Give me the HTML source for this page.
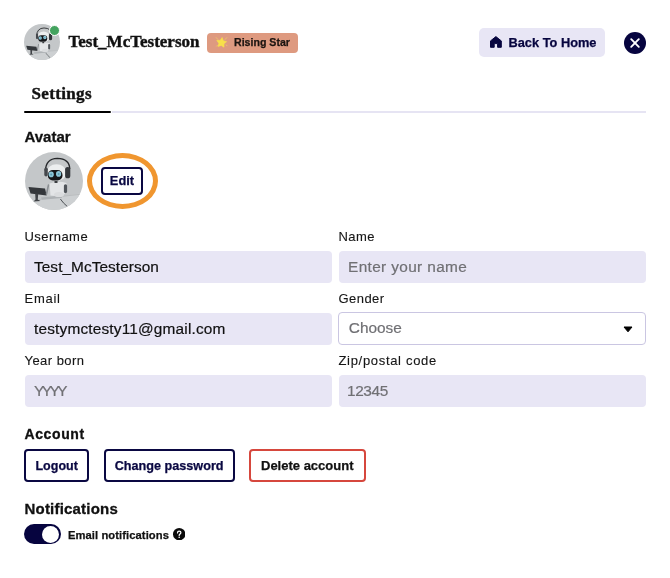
<!DOCTYPE html>
<html><head><meta charset="utf-8">
<style>
*{box-sizing:border-box;margin:0;padding:0}
html,body{width:670px;height:578px;background:#fff;overflow:hidden}
body{position:relative;will-change:transform;font-family:"Liberation Sans",sans-serif;color:#111}
.a{position:absolute;white-space:nowrap}
.serif{font-family:"Liberation Serif",serif;font-weight:700;color:#111;-webkit-text-stroke:0.4px #111}
.lbl{font-size:13px;color:#161616;line-height:16px;letter-spacing:0.45px;-webkit-text-stroke:0.12px currentColor}
.inp{position:absolute;height:32px;width:307px;background:#e8e6f5;border-radius:4px;font-size:15.4px;line-height:32px;padding-left:9.5px;color:#111;letter-spacing:0.06px;-webkit-text-stroke:0.2px currentColor}
.ph{color:#707074}
.h{font-size:14px;font-weight:700;color:#111;line-height:16px;-webkit-text-stroke:0.3px #111}
.bs{-webkit-text-stroke:0.25px currentColor}
.btn{position:absolute;height:33px;border:2px solid #0a0842;border-radius:4px;font-size:13px;font-weight:700;color:#0a0842;line-height:29px;text-align:center;-webkit-text-stroke:0.25px currentColor}
</style></head><body>

<!-- small avatar -->
<svg class="a" style="left:24px;top:24px" width="36" height="36" viewBox="0 0 58 58"><use href="#robot"/></svg>
<div class="a" style="left:48.6px;top:24.7px;width:11.4px;height:11.4px;border-radius:50%;background:#44a35f;border:1.5px solid #fff"></div>

<div class="a serif" style="left:68.5px;top:31.8px;font-size:17px;line-height:20px">Test_McTesterson</div>

<div class="a" style="left:207px;top:33px;width:91px;height:19.5px;background:#de9a80;border-radius:4px"></div>
<svg class="a" style="left:215px;top:36px" width="13" height="13" viewBox="0 0 13 13"><path d="M7.12 1.54 L8.34 4.72 L11.60 5.70 L8.95 7.84 L9.03 11.24 L6.18 9.38 L2.96 10.51 L3.85 7.22 L1.78 4.51 L5.19 4.34 Z" fill="#f8e04a" stroke="#f8e04a" stroke-width="0.6" stroke-linejoin="round"/><path d="M1.2 1.6 L2.8 3.4 M11.8 1.6 L10.2 3.4 M1.5 10.2 L2.4 9.3 M12 9.8 L11.2 8.8" stroke="#f3d860" stroke-width="0.8" stroke-linecap="round" opacity="0.8"/></svg>
<div class="a bs" style="left:234px;top:36px;font-size:10.6px;font-weight:700;color:#1b1410;line-height:13px">Rising Star</div>

<div class="a" style="left:479.3px;top:28px;width:126px;height:28.8px;background:#e8e6f5;border-radius:5px"></div>
<svg class="a" style="left:489.8px;top:36.2px" width="12" height="12" viewBox="0 0 12 12"><path d="M5.9 0.6 L11.3 4.9 L11.3 11.3 L7.6 11.3 L7.6 7.6 L4.2 7.6 L4.2 11.3 L0.5 11.3 L0.5 4.9 Z" fill="#07053f" stroke="#07053f" stroke-width="1" stroke-linejoin="round"/></svg>
<div class="a bs" style="left:508.5px;top:35px;font-size:12.8px;font-weight:700;color:#07053f;line-height:15px">Back To Home</div>

<div class="a" style="left:623.7px;top:31.5px;width:22px;height:22px;border-radius:50%;background:#06043f"></div>
<svg class="a" style="left:623.7px;top:31.5px" width="22" height="22" viewBox="0 0 22 22"><path d="M7.2 7.2 L14.8 14.8 M14.8 7.2 L7.2 14.8" stroke="#fff" stroke-width="1.9" stroke-linecap="round"/></svg>

<!-- tabs -->
<div class="a serif" style="left:31.5px;top:84px;font-size:17px;line-height:20px;letter-spacing:0.35px">Settings</div>
<div class="a" style="left:112px;top:111px;width:534px;height:2.3px;background:#e6e4f3"></div>
<div class="a" style="left:24px;top:110.7px;width:86.5px;height:2.5px;background:#000;border-radius:2px"></div>

<div class="a h" style="left:24.5px;top:128.8px;font-size:15px">Avatar</div>
<svg class="a" style="left:24.5px;top:152.3px" width="58" height="58" viewBox="0 0 58 58"><use href="#robot"/></svg>

<div class="a" style="left:87.2px;top:152.7px;width:71px;height:56px;border-radius:50%;border:5.5px solid #f0962f"></div>
<div class="a btn" style="left:100.6px;top:167.2px;width:42.7px;height:28.3px;font-size:12.8px;line-height:24.6px;border-width:2px">Edit</div>

<!-- form -->
<div class="a lbl" style="left:24.5px;top:229px">Username</div>
<div class="a lbl" style="left:338.5px;top:229px">Name</div>
<div class="inp" style="left:24.5px;top:250.5px">Test_McTesterson</div>
<div class="inp ph" style="left:338.5px;top:250.5px;letter-spacing:0.36px">Enter your name</div>

<div class="a lbl" style="left:24.5px;top:290.6px;letter-spacing:0.75px">Email</div>
<div class="a lbl" style="left:338.5px;top:291px">Gender</div>
<div class="inp" style="left:24.5px;top:312.5px;letter-spacing:0.18px">testymctesty11@gmail.com</div>
<div class="inp ph" style="left:338.3px;top:312.2px;height:32.4px;width:307.4px;background:#fff;border:1px solid #cac6e2;padding-left:9.5px;line-height:30px;letter-spacing:0px">Choose</div>
<svg class="a" style="left:622.8px;top:325.8px" width="10" height="7" viewBox="0 0 10 7"><path d="M1 1 L9 1 L5 5.8 Z" fill="#000" stroke="#000" stroke-width="1" stroke-linejoin="round"/></svg>

<div class="a lbl" style="left:24.5px;top:353px">Year born</div>
<div class="a lbl" style="left:338.5px;top:353px;letter-spacing:0.68px">Zip/postal code</div>
<div class="inp ph" style="left:24.5px;top:374.5px;letter-spacing:-2.5px">YYYY</div>
<div class="inp ph" style="left:338.5px;top:374.5px;letter-spacing:-0.4px;padding-left:8.5px">12345</div>

<!-- account -->
<div class="a h" style="left:24.5px;top:425.5px;letter-spacing:0.6px">Account</div>
<div class="btn" style="left:24.3px;top:449px;width:64.7px;font-size:12.5px;line-height:30.6px">Logout</div>
<div class="btn" style="left:103.6px;top:449px;width:131px;font-size:12.65px;line-height:30.6px">Change password</div>
<div class="btn" style="left:249px;top:449px;width:116.5px;border-color:#d6473d;color:#111">Delete account</div>

<div class="a h" style="left:24.5px;top:501px;font-size:15px;letter-spacing:0.2px">Notifications</div>
<div class="a" style="left:24.4px;top:524px;width:36.5px;height:20px;border-radius:10px;background:#06043f"></div>
<div class="a" style="left:42px;top:525.5px;width:17px;height:17px;border-radius:50%;background:#fff"></div>
<div class="a bs" style="left:68px;top:527.5px;font-size:11.2px;font-weight:700;color:#111;line-height:14px;letter-spacing:0.08px">Email notifications</div>
<svg class="a" style="left:173px;top:528px" width="12.4" height="12.4" viewBox="0 0 12.4 12.4"><circle cx="6.2" cy="6.2" r="6.2" fill="#0a0a0a"/><path d="M4.5 4.9 Q4.5 3.1 6.2 3.1 Q7.9 3.1 7.9 4.6 Q7.9 5.6 6.9 6.1 Q6.2 6.5 6.2 7.4" stroke="#fff" stroke-width="1.25" fill="none" stroke-linecap="round"/><circle cx="6.2" cy="9.2" r="0.8" fill="#fff"/></svg>

<svg width="0" height="0" style="position:absolute">
<defs>
<g id="robot">
  <clipPath id="rc"><circle cx="29" cy="29" r="29"/></clipPath>
  <g clip-path="url(#rc)">
    <rect width="58" height="58" fill="#c4c7c9"/>
    <path d="M0 50 L58 41 L58 58 L0 58 Z" fill="#cdd0d2"/>
    <path d="M14 47.5 L40 44 L58 42" stroke="#b5b8ba" stroke-width="0.8" fill="none"/>
    <!-- monitor -->
    <path d="M3.5 35.1 L20 36.5 L21.7 43.4 L5.5 41.6 Z" fill="#34373b"/>
    <path d="M10.2 41.5 L13.2 41.8 L12.8 47.5 L15.5 49 L8.5 49.5 L10.5 47.5 Z" fill="#404347"/>
    <path d="M16 45.5 L36 43.5 L37 46 L17 47.8 Z" fill="#aeb2b5"/>
    <!-- arm -->
    <path d="M23.5 33 L21.5 42" stroke="#8a8e92" stroke-width="1.6" fill="none" stroke-linecap="round"/>
    <!-- body -->
    <path d="M24.6 31.5 Q33 28.5 41.5 31 L41.5 41 Q35 45 25.5 43.5 Z" fill="#e3e5e7"/>
    <ellipse cx="34" cy="42.5" rx="5" ry="2.6" fill="#dadcde"/>
    <rect x="38.9" y="32.2" width="3.2" height="9" rx="1.6" fill="#50555a"/>
    <rect x="29.5" y="28.5" width="3" height="2.5" fill="#3a3d40"/>
    <path d="M35.4 47 Q38 51 42.3 54.5" stroke="#3c4044" stroke-width="0.9" fill="none"/>
    <!-- headphone band -->
    <path d="M20.4 19 Q20.8 6.6 32.3 6.4 Q44.5 6.8 44.8 17" stroke="#25272a" stroke-width="1.4" fill="none"/>
    <!-- head -->
    <ellipse cx="31.5" cy="20.6" rx="10" ry="8.4" fill="#eceeef"/>
    <rect x="22.8" y="18" width="14.7" height="10.4" rx="5" fill="#15171a"/>
    <ellipse cx="26.2" cy="22.4" rx="2.6" ry="2.8" fill="#8cc7d9"/>
    <ellipse cx="33.6" cy="21.9" rx="2.6" ry="2.8" fill="#8cc7d9"/>
    <circle cx="26.2" cy="22.4" r="1" fill="#5a9cb3"/>
    <circle cx="33.6" cy="21.9" r="1" fill="#5a9cb3"/>
    <!-- ear cups -->
    <rect x="19.3" y="15.5" width="3.5" height="9" rx="1.75" fill="#45484c"/>
    <rect x="40.1" y="15" width="5.2" height="11.3" rx="2.6" fill="#34373b"/>
  </g>
</g>
</defs>
</svg>
</body></html>
